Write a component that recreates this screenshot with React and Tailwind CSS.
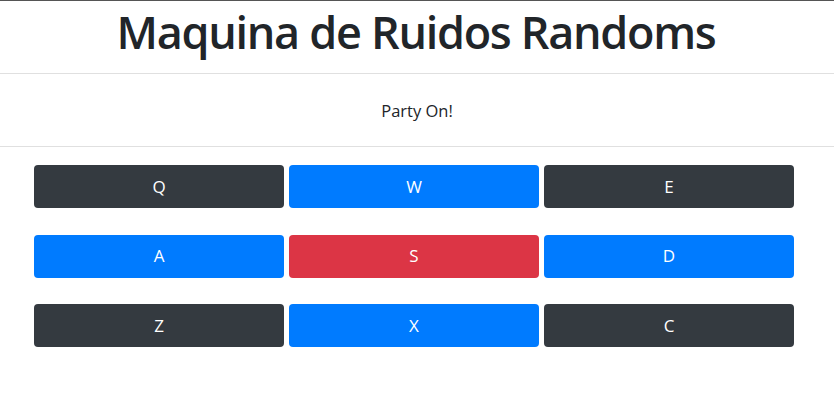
export default function App() {
  const rows = [
    [["Q", "bg-[#343a40]"], ["W", "bg-[#007bff]"], ["E", "bg-[#343a40]"]],
    [["A", "bg-[#007bff]"], ["S", "bg-[#dc3545]"], ["D", "bg-[#007bff]"]],
    [["Z", "bg-[#343a40]"], ["X", "bg-[#007bff]"], ["C", "bg-[#343a40]"]],
  ];
  return (
    <div className="w-[834px] h-[419px] bg-white border-t border-[#555] text-[#212529]" style={{ fontFamily: '"Open Sans", "Noto Sans", sans-serif' }}>
      <div className="h-[72px] flex items-center justify-center">
        <h1 className="text-[45px] leading-none font-semibold tracking-[-1.3px] pb-[11px] pr-[2px]">Maquina de Ruidos Randoms</h1>
      </div>
      <div className="h-px bg-[#e0e0e0]" />
      <div className="h-[72px] flex items-center justify-center text-[16.5px] pt-[2px]">Party On!</div>
      <div className="h-px bg-[#e0e0e0]" />
      <div className="pl-[34px] pt-[18px] flex flex-col gap-[26.5px]">
        {rows.map((r, i) => (
          <div key={i} className="flex gap-[5px]">
            {r.map(([k, c]) => (
              <div key={k} className={`w-[250px] h-[43px] rounded-[4px] ${c} text-white text-[17px] flex items-center justify-center`}>{k}</div>
            ))}
          </div>
        ))}
      </div>
    </div>
  );
}
